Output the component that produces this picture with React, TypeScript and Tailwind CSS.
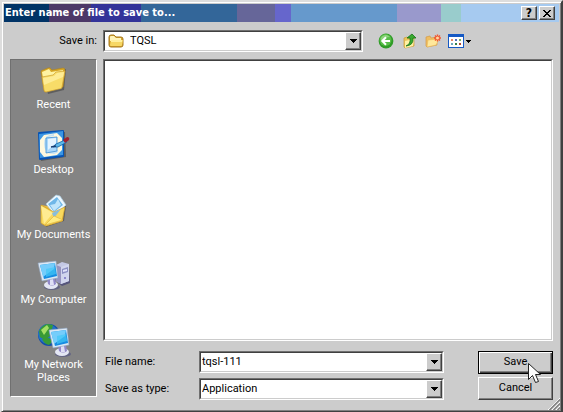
import type { ReactNode } from "react";

const sunken =
  "border border-t-[#707070] border-l-[#707070] border-r-white border-b-white";
const sunkenInner =
  "border border-t-[#404040] border-l-[#404040] border-r-[#cccccc] border-b-[#cccccc]";
const raised =
  "border border-t-white border-l-white border-r-[#404040] border-b-[#404040] bg-[#cccccc] shadow-[inset_-1px_-1px_0_#808080]";

function DownArrow() {
  return (
    <svg width="7" height="4" viewBox="0 0 7 4" shapeRendering="crispEdges" aria-hidden="true">
      <path d="M0 0h7v1H6v1H5v1H4v1H3V3H2V2H1V1H0z" fill="#000" />
    </svg>
  );
}

function SmallFolder() {
  return (
    <svg width="16" height="14" viewBox="0 0 16 14" aria-hidden="true">
      <path d="M1 3Q1 1 3 1h3l2 2h5q2 0 2 2v6q0 2-2 2H3q-2 0-2-2z" fill="#d5a32b" stroke="#a87b20" />
      <path d="M2 3q0-1 1-1h3l2 2h5v3H2z" fill="#fff4ba" />
      <path d="M3 6h12l-1 5q0 1-1 1H3q-1 0-1-1z" fill="#f7d865" />
      <path d="M3 6h11v2H3z" fill="#fff0a0" />
    </svg>
  );
}

function BackIcon() {
  return (
    <svg width="16" height="16" viewBox="0 0 16 16" aria-hidden="true">
      <circle cx="8" cy="8" r="7.4" fill="#2f9b26" />
      <circle cx="7.5" cy="7" r="6" fill="#58bd48" />
      <path d="M2.5 6Q4 1.5 9 2l3 2Q7 4 4 8z" fill="#8ed47d" />
      <path d="M12 8H4.5M8 4.3L4.3 8 8 11.7" fill="none" stroke="#fff" strokeWidth="2" />
    </svg>
  );
}

function UpIcon() {
  return (
    <svg width="16" height="16" viewBox="0 0 16 16" aria-hidden="true">
      <path d="M2 5l3-1 1 1 6-1v9l-9 2-1-1z" fill="#ecc45b" stroke="#c89a38" strokeWidth=".7" />
      <path d="M3 8l9-2-1 7-8 2z" fill="#fff1a5" />
      <path d="M4 13q5-2 4-8H5l5-4 4 4h-3q1 7-7 8z" fill="#39a92f" stroke="#167318" strokeWidth=".8" />
    </svg>
  );
}

function NewFolderIcon() {
  return (
    <svg width="18" height="16" viewBox="0 0 18 16" aria-hidden="true">
      <path d="M2 4l4-1 1 2 6-1v8l-10 2-1-1z" fill="#efbe62" stroke="#d29a48" strokeWidth=".7" />
      <path d="M4 7l11-1-3 6-9 2z" fill="#ffe89b" stroke="#e6b553" strokeWidth=".5" />
      <path d="M13.500 1.500v7M10 5h7M11 2.500l5 5M16 2.500l-5 5" stroke="#f0542f" strokeWidth="1.400" />
      <circle cx="13.500" cy="5" r="1.500" fill="#ffd7a0" />
    </svg>
  );
}

function ViewIcon() {
  return (
    <svg width="16" height="14" viewBox="0 0 16 14" shapeRendering="crispEdges" aria-hidden="true">
      <rect width="16" height="14" rx="1" fill="#1559c4" />
      <rect x="1" y="3" width="14" height="10" fill="#fff" />
      <path d="M3 5h2v2H3z" fill="#e58a66" />
      <path d="M7 5h2v2H7z" fill="#536fbd" />
      <path d="M11 5h2v2h-2z" fill="#75af60" />
      <path d="M3 9h2v2H3z" fill="#70a8bd" />
      <path d="M7 9h2v2H7z" fill="#348049" />
      <path d="M11 9h2v2h-2z" fill="#b04632" />
    </svg>
  );
}

function RecentIcon() {
  return (
    <svg width="32" height="32" viewBox="0 0 32 32" aria-hidden="true">
      <path d="M6 12l22-7-2 21-16 4z" fill="#3f3f3f" opacity=".55" />
      <path d="M3 8q0-2 2-2l5-2q2-1 3 1l1 1 11-2q2 0 2 2l-2 17-17 5q-2 0-2-2z" fill="#d8a825" stroke="#ac811e" strokeWidth=".6" />
      <path d="M4 8l7-3 2 3 12-2v4L5 14z" fill="#fff3a2" />
      <path d="M4 13l11-2 3-3 9-1-3 16q0 2-3 2L8 28q-2 0-2-2z" fill="#f8dc68" stroke="#cda033" strokeWidth=".7" />
      <path d="M5 14l11-2 3-3 7-1-1 5L6 21z" fill="#fff0a0" opacity=".8" />
    </svg>
  );
}

function DesktopIcon() {
  return (
    <svg width="34" height="32" viewBox="1 0 34 32" aria-hidden="true">
      <path d="M4 6l25-3 1 25-25 4z" fill="#333" opacity=".5" />
      <path d="M2 4q0-1 1-1l24-2q1 0 1 1v25q0 1-1 1L4 31q-1 0-1-1z" fill="#0754b4" />
      <path d="M3 5l24-3v24L4 29z" fill="#3c96e4" />
      <path d="M8 6l13-2 5 5v12l-5 5-13 2-4-5V11z" fill="#fff9df" />
      <path d="M18 6q-9 0-9 9t9 9l4-2" fill="none" stroke="#c7e4f6" strokeWidth="2" />
      <path d="M10 9l11-1v14l-11 2z" fill="#acd9fb" stroke="#3d8fd6" strokeWidth=".8" />
      <path d="M12 10l8-1v5l-8 7z" fill="#e5f4ff" />
      <path d="M17 18l3-3 9-4 2 2-9 5z" fill="#5db9ea" stroke="#155fa2" strokeWidth=".8" />
      <path d="M27 11l4-3q3 0 2 3l-4 3z" fill="#a1212e" />
      <path d="M15 18l5-1" stroke="#183d70" strokeWidth="1.500" />
    </svg>
  );
}

function DocumentsIcon() {
  return (
    <svg width="34" height="34" viewBox="0 0 34 34" aria-hidden="true">
      <path d="M6 18l23-5-2 15-18 6z" fill="#333" opacity=".5" />
      <path d="M4 12l6 1 17-2-1 17-17 5-4-2z" fill="#e9b83c" />
      <path d="M9 11L19 2l4 1 6 9-11 10z" fill="#edf8ff" stroke="#a5c7dd" strokeWidth=".7" />
      <path d="M11 11l9-7 6 8-9 7z" fill="#6fb7e8" />
      <path d="M13 12l5-1 3-5 3 6-7 6z" fill="#c0e5fa" />
      <path d="M4 12l7 4 6 3 11-5-3 14-16 5-5-3z" fill="#f8d95d" stroke="#cf9e2b" strokeWidth=".7" />
      <path d="M4 13l7 4 5 3-9 11z" fill="#ffeb91" />
      <path d="M15 20l9-4-7 9z" fill="#87bddc" />
      <path d="M8 32l9-9 9 4z" fill="#ffec80" stroke="#d7a633" strokeWidth=".5" />
    </svg>
  );
}

function Monitor() {
  return (
    <>
      <ellipse cx="15" cy="28" rx="8" ry="3" fill="#555784" opacity=".7" />
      <ellipse cx="14" cy="26" rx="7" ry="4" fill="#e4e7f4" />
      <path d="M10 20l8-1 1 6q-4 3-8 0z" fill="#9188c9" />
      <path d="M13 20h3l1 6h-4z" fill="#dfe0f5" />
      <path d="M1 4l18-2 2 17-16 3z" fill="#dce8f5" stroke="#8ba1bc" strokeWidth=".6" />
      <path d="M3 6l15-2 2 13-13 3z" fill="#168ce2" />
      <path d="M3 6l15-2-1 6-11 8z" fill="#75cdfb" />
      <path d="M9 10l9-2 1 7-10 3z" fill="#43c7f7" opacity=".7" />
    </>
  );
}

function ComputerIcon() {
  return (
    <svg width="34" height="32" viewBox="0 0 34 32" aria-hidden="true">
      <path d="M21 9l11-1 1 16-8 3-4-3z" fill="#55557b" />
      <path d="M19 6l6-3 7 2v17l-8 3-5-3z" fill="#c4c9e5" />
      <path d="M19 6l5 2v17l-5-3z" fill="#9694bf" />
      <path d="M24 8l8-3v17l-8 3z" fill="#d1d6ed" />
      <path d="M25 10l6-2v5l-6 2z" fill="#8c91c4" />
      <path d="M26 11l4-1v2l-4 1z" fill="#e0e3fa" />
      <circle cx="28" cy="19" r="1" fill="#7771c3" />
      <Monitor />
    </svg>
  );
}

function NetworkIcon() {
  return (
    <svg width="34" height="36" viewBox="0 0 34 36" aria-hidden="true">
      <circle cx="12" cy="13" r="11" fill="#124ea8" />
      <circle cx="11" cy="12" r="10" fill="#2271c8" />
      <path d="M2 9q3-6 9-7l5 1-1 4-3 2 1 5-5 4-5-3zM5 17l7-1 4 3-4 4q-5-1-7-6z" fill="#389a35" />
      <path d="M4 8l6-5 2 3-5 7z" fill="#a5df65" />
      <g transform="translate(11 4)"><Monitor /></g>
    </svg>
  );
}

function Place({ icon, children }: { icon: ReactNode; children: ReactNode }) {
  return (
    <button type="button" className="flex min-h-[65px] w-full flex-col items-center text-center leading-[13px] text-white">
      <span className="flex h-9 items-center">{icon}</span>
      <span>{children}</span>
    </button>
  );
}

function Dropdown({ id, value, icon }: { id: string; value: string; icon?: ReactNode }) {
  return (
    <div className={`relative min-w-0 ${sunken}`}>
      <select id={id} defaultValue={value} className={`block h-5 w-full appearance-none bg-white pr-5 outline-none ${sunkenInner} ${icon ? "pl-[25px]" : "pl-px"}`}>
        <option>{value}</option>
      </select>
      {icon && <span className="pointer-events-none absolute top-[3px] left-1">{icon}</span>}
      <span className={`pointer-events-none absolute top-px right-px bottom-px flex w-4 items-center justify-center ${raised}`}>
        <DownArrow />
      </span>
    </div>
  );
}

export default function App() {
  return (
    <main className="relative flex min-h-screen flex-col border-2 border-t-[#dddddd] border-r-[#404040] border-b-[#404040] border-l-[#dddddd] bg-[#cccccc] font-[Roboto,'Liberation_Sans',sans-serif] text-[11px] text-black shadow-[inset_1px_1px_0_white,inset_-1px_-1px_0_#808080]">
      <header className="mx-0.5 mt-0.5 flex h-[18px] shrink-0 items-center bg-[linear-gradient(90deg,#003366_45px,#4c3868_45px_87px,#333399_87px_137px,#336699_137px_233px,#666699_233px_271px,#6666cc_271px_287px,#6699cc_287px_393px,#9999cc_393px_437px,#99cccc_437px_457px,#a6caf0_457px)] pr-1 pl-px">
        <h1 className="flex-1 font-['DejaVu_Sans_Condensed',sans-serif] text-[11px] font-bold text-white">Enter name of file to save to...</h1>
        <button type="button" aria-label="Help" className={`flex h-[14px] w-4 items-center justify-center font-['DejaVu_Sans_Condensed',sans-serif] text-[12px] leading-none font-bold ${raised}`}>?</button>
        <button type="button" aria-label="Close" className={`ml-0.5 flex h-[14px] w-4 items-center justify-center ${raised}`}>
          <svg width="8" height="7" viewBox="0 0 8 7" shapeRendering="crispEdges" aria-hidden="true">
            <path d="M0 0h2v1h1v1h2V1h1V0h2v1H7v1H6v1H5v1h1v1h1v1h1v1H6V6H5V5H3v1H2v1H0V6h1V5h1V4h1V3H2V2H1V1H0z" fill="#000" />
          </svg>
        </button>
      </header>

      <form onSubmit={(e) => e.preventDefault()} className="flex flex-1 flex-col px-2 pt-2 pb-[11px]">
        <div className="grid grid-cols-[87px_260px_auto] items-center gap-x-1.5">
          <label htmlFor="folder" className="text-right">Save in:</label>
          <Dropdown id="folder" value="TQSL" icon={<SmallFolder />} />
          <div className="flex items-center pl-[9px]">
            <button type="button" aria-label="Back" className="w-6"><BackIcon /></button>
            <button type="button" aria-label="Up one level" className="w-[22px]"><UpIcon /></button>
            <button type="button" aria-label="New folder" className="w-6"><NewFolderIcon /></button>
            <button type="button" aria-label="View menu" className="flex items-center gap-0.5">
              <ViewIcon />
              <svg width="5" height="3" viewBox="0 0 5 3" shapeRendering="crispEdges" aria-hidden="true"><path d="M0 0h5v1H4v1H3v1H2V2H1V1H0z" /></svg>
            </button>
          </div>
        </div>

        <div className="mt-[7px] grid flex-1 grid-cols-[87px_minmax(0,1fr)] gap-x-1.5">
          <nav aria-label="Places" className={`mb-[3px] flex flex-col bg-[#848484] pt-0.5 ${sunken}`}>
            <Place icon={<RecentIcon />}>Recent</Place>
            <Place icon={<DesktopIcon />}>Desktop</Place>
            <Place icon={<DocumentsIcon />}>My Documents</Place>
            <Place icon={<ComputerIcon />}>My Computer</Place>
            <Place icon={<NetworkIcon />}>My Network<br />Places</Place>
          </nav>

          <div className="flex flex-col">
            <section aria-label="Files" className={`flex min-h-[282px] flex-1 ${sunken}`}>
              <div className={`flex-1 bg-white ${sunkenInner}`} />
            </section>
            <div className="mt-2.5 flex justify-between gap-6">
              <div className="grid max-w-[341px] flex-1 grid-cols-[90px_minmax(0,1fr)] items-center gap-x-1.5 gap-y-[5px]">
                <label htmlFor="filename" className="pl-0.5">File name:</label>
                <div className={`flex ${sunken}`}>
                  <div className={`flex h-5 min-w-0 flex-1 bg-white ${sunkenInner}`}>
                    <input id="filename" type="text" defaultValue="tqsl-111" className="min-w-0 flex-1 pl-px outline-none" />
                    <button type="button" aria-label="Recent file names" className={`flex w-4 items-center justify-center ${raised}`}><DownArrow /></button>
                  </div>
                </div>
                <label htmlFor="filetype" className="pl-0.5">Save as type:</label>
                <Dropdown id="filetype" value="Application" />
              </div>
              <div className="flex w-[75px] flex-col gap-[3px]">
                <button type="submit" className="relative h-[23px] border border-black bg-[#cccccc] shadow-[inset_1px_1px_0_white,inset_-1px_-1px_0_#404040,inset_-2px_-2px_0_#808080]">
                  Save
                  <svg className="absolute top-[11px] left-[49px] z-10" width="13" height="21" viewBox="0 0 13 21" aria-hidden="true">
                    <path d="M.5.5v16l4-4 3 7 3-1-3-7h5z" fill="#fff" stroke="#222" />
                  </svg>
                </button>
                <button type="button" className={`h-[23px] ${raised}`}>Cancel</button>
              </div>
            </div>
          </div>
        </div>
      </form>
      <svg className="absolute right-px bottom-px" width="12" height="12" viewBox="0 0 12 12" aria-hidden="true">
        <path d="M0 12L12 0M4 12l8-8M8 12l4-4" stroke="#fff" />
        <path d="M1.500 12L12 1.500M5.500 12L12 5.500M9.500 12L12 9.500" stroke="#808080" strokeWidth="1.500" />
      </svg>
    </main>
  );
}
